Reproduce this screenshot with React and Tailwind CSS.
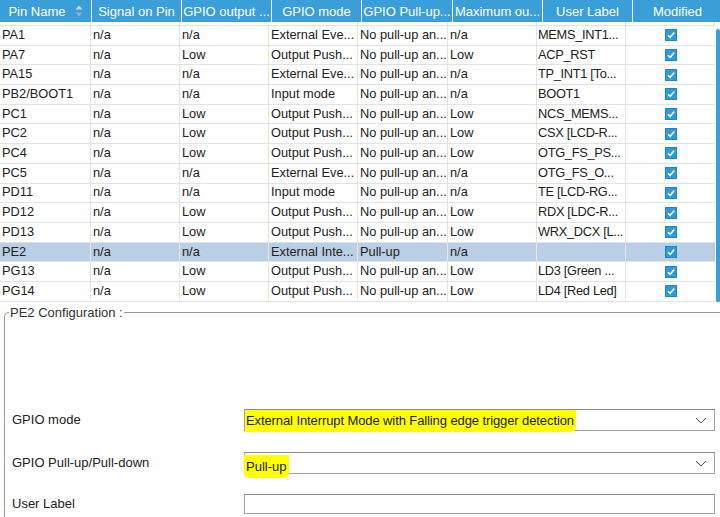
import React from 'react';

const cols = 'grid grid-cols-[91px_89px_89px_89px_90px_89px_89px_89px]';

const headers = [
  'Pin Name',
  'Signal on Pin',
  'GPIO output ...',
  'GPIO mode',
  'GPIO Pull-up...',
  'Maximum ou...',
  'User Label',
  'Modified',
];

const np = 'No pull-up an...';

const rows = [
  ['PA1', 'n/a', 'n/a', 'External Eve...', np, 'n/a', 'MEMS_INT1...'],
  ['PA7', 'n/a', 'Low', 'Output Push...', np, 'Low', 'ACP_RST'],
  ['PA15', 'n/a', 'n/a', 'External Eve...', np, 'n/a', 'TP_INT1 [To...'],
  ['PB2/BOOT1', 'n/a', 'n/a', 'Input mode', np, 'n/a', 'BOOT1'],
  ['PC1', 'n/a', 'Low', 'Output Push...', np, 'Low', 'NCS_MEMS...'],
  ['PC2', 'n/a', 'Low', 'Output Push...', np, 'Low', 'CSX [LCD-R...'],
  ['PC4', 'n/a', 'Low', 'Output Push...', np, 'Low', 'OTG_FS_PS...'],
  ['PC5', 'n/a', 'n/a', 'External Eve...', np, 'n/a', 'OTG_FS_O...'],
  ['PD11', 'n/a', 'n/a', 'Input mode', np, 'n/a', 'TE [LCD-RG...'],
  ['PD12', 'n/a', 'Low', 'Output Push...', np, 'Low', 'RDX [LDC-R...'],
  ['PD13', 'n/a', 'Low', 'Output Push...', np, 'Low', 'WRX_DCX [L...'],
  ['PE2', 'n/a', 'n/a', 'External Inte...', 'Pull-up', 'n/a', '', true],
  ['PG13', 'n/a', 'Low', 'Output Push...', np, 'Low', 'LD3 [Green ...'],
  ['PG14', 'n/a', 'Low', 'Output Push...', np, 'Low', 'LD4 [Red Led]'],
];

const SortIcon = () => (
  <svg width="8" height="12" viewBox="0 0 8 12" className="ml-[9px]">
    <path d="M4 0.5 L7.5 4.5 L0.5 4.5 Z" fill="#c9d6df" />
    <path d="M4 11.5 L7.5 7.5 L0.5 7.5 Z" fill="#8fb3cb" />
  </svg>
);

const Check = () => (
  <div className="w-[12px] h-[12px] bg-[#2f9ad6] border border-[#1f86c4] flex items-center justify-center">
    <svg width="10" height="10" viewBox="0 0 10 10">
      <path d="M2 5.2 L4.2 7.4 L8.2 2.6" fill="none" stroke="white" strokeWidth="1.6" />
    </svg>
  </div>
);

const Chevron = () => (
  <svg width="12" height="7" viewBox="0 0 12 7">
    <path d="M1 1 L6 6 L11 1" fill="none" stroke="#555" strokeWidth="1" />
  </svg>
);

export default function App() {
  return (
    <div
      className="w-[720px] h-[517px] overflow-hidden bg-white text-[13px] text-[#222] flex flex-col"
      style={{ fontFamily: '"Liberation Sans", Arial, sans-serif' }}
    >
      {/* pin table */}
      <div className="flex">
        <div className="w-[715px]">
          <div className={cols + ' h-[22px] gap-x-px'}>
            {headers.map((h, i) => (
              <div
                key={h}
                className="bg-[#3a9fd8] text-white flex items-center justify-center whitespace-nowrap overflow-hidden leading-none"
              >
                {h}
                {i === 0 && <SortIcon />}
              </div>
            ))}
          </div>
          <div className={cols + ' h-[4px] border-b border-[#e3e3e3]'}>
            {headers.map((h) => (
              <div key={h} className="border-r border-[#e3e3e3]" />
            ))}
          </div>
          {rows.map((r) => (
            <div
              key={r[0]}
              className={cols + ' h-[19.7px] text-[12.8px] border-b border-[#e3e3e3] ' + (r[7] ? 'bg-[#b9cfe6]' : 'bg-white')}
            >
              {r.slice(0, 7).map((c, i) => (
                <div
                  key={i}
                  className={
                    'border-r border-[#e3e3e3] flex items-center whitespace-nowrap overflow-hidden leading-none ' +
                    (i === 6 ? 'pl-px tracking-[-0.3px]' : 'pl-[2px]')
                  }
                >
                  {c}
                </div>
              ))}
              <div className="flex items-center justify-center">
                <Check />
              </div>
            </div>
          ))}
        </div>
        <div className="w-[5px] pt-[29px] pl-px">
          <div className="w-[4px] h-[273px] bg-[#3a9fd8] rounded-t-[3px] rounded-b-[2px]" />
        </div>
      </div>

      {/* configuration group */}
      <fieldset className="mt-[3px] ml-[4px] flex-1 border-l border-t border-[#9a9a9a] rounded-tl-[5px]">
        <legend className="ml-[4px] px-px leading-[15px] text-[#333]">PE2 Configuration :</legend>
        <div className="pl-[7px] pr-[5px] pt-[89px] flex flex-col">
          <div className="flex items-center h-[22px]">
            <div className="w-[232px]">GPIO mode</div>
            <div className="flex-1 h-[22px] border border-[#a4a4a4] border-t-[#8c8c8c] flex items-center justify-between pr-[7px]">
              <span className="bg-[#ffff00] h-[22px] mt-[1px] flex items-center pl-px pr-[2px] rounded-br-[6px] leading-none text-[#222] tracking-[-0.1px]">
                External Interrupt Mode with Falling edge trigger detection
              </span>
              <Chevron />
            </div>
          </div>
          <div className="flex items-center h-[22px] mt-[21px]">
            <div className="w-[232px]">GPIO Pull-up/Pull-down</div>
            <div className="flex-1 h-[22px] border border-[#a4a4a4] border-t-[#8c8c8c] flex items-start justify-between pr-[7px]">
              <span className="bg-[#ffff00] h-[23px] mt-[2px] -ml-px flex items-center pl-[2px] pr-[3px] rounded-b-[5px] leading-none text-[#222]">
                Pull-up
              </span>
              <span className="self-center">
                <Chevron />
              </span>
            </div>
          </div>
          <div className="flex items-center h-[20px] mt-[20px]">
            <div className="w-[232px]">User Label</div>
            <div className="flex-1 h-[20px] border border-[#a4a4a4] border-t-[#8c8c8c] bg-white" />
          </div>
        </div>
      </fieldset>
    </div>
  );
}
